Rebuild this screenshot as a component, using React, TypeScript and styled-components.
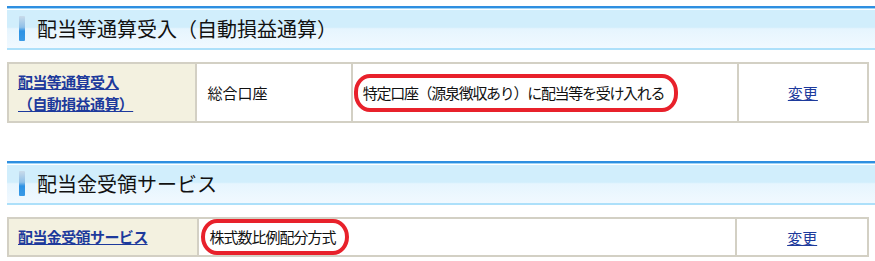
import React from 'react';
import styled, { createGlobalStyle } from 'styled-components';

const GlobalStyle = createGlobalStyle`
  body {
    margin: 0;
    background: #fff;
    font-family: "Noto Sans CJK JP", "Liberation Sans", sans-serif;
  }
`;

const Page = styled.div`
  padding: 6px 0 0 7px;
`;

const Section = styled.section`
  margin-bottom: 38px;

  &:last-child {
    margin-bottom: 0;
  }
`;

const SectionHeader = styled.div`
  display: flex;
  align-items: center;
  height: 40px;
  border-top: 2px solid #2f8fe0;
  border-bottom: 2px solid #ade0fa;
  box-shadow: inset 0 1px 0 #9fd4f7, inset 0 2px 0 #ffffff;
  background: linear-gradient(#d1eefc 0%, #d1eefc 48%, #e6f5fe 52%, #f1f9ff 100%);
  padding-left: 12px;
  margin-bottom: 12px;
`;

const Marker = styled.span`
  width: 6px;
  height: 25px;
  border-radius: 1px;
  background: linear-gradient(#c9dbea 0%, #8fc0e8 45%, #2d92e4 60%, #3a9ae6 100%);
  margin-right: 12px;
`;

const Title = styled.h2`
  margin: 0;
  font-size: 20px;
  font-weight: normal;
  color: #111;
  letter-spacing: 0;
`;

const Table = styled.table`
  width: 862px;
  border-collapse: collapse;
  table-layout: fixed;
  font-size: 15px;
  color: #111;
`;

const Row = styled.tr<{ $tall?: boolean }>`
  height: ${(p) => (p.$tall ? '59px' : '38px')};
`;

const LabelCell = styled.th`
  width: 177px;
  background: #f3f1e0;
  border: 2px solid #d3d0c4;
  padding: 0 0 0 9px;
  text-align: left;
  vertical-align: middle;
`;

const Cell = styled.td<{ $w: number; $pad?: number; $center?: boolean }>`
  width: ${(p) => p.$w}px;
  border: 2px solid #d3d0c4;
  padding: 0 0 0 ${(p) => p.$pad ?? 10}px;
  text-align: ${(p) => (p.$center ? 'center' : 'left')};
  vertical-align: middle;
`;

const LabelLink = styled.a`
  color: #1d3a9c;
  font-weight: bold;
  text-decoration: underline;
  line-height: 22px;
  letter-spacing: -0.6px;
`;

const ChangeLink = styled.a`
  color: #1d3a9c;
  text-decoration: underline;
`;

const Circled = styled.span<{ $small?: boolean }>`
  display: inline-block;
  border: 4px solid #e8212b;
  border-radius: 16px / 18px;
  padding: ${(p) => (p.$small ? '4px 10px 4px 4px' : '5px 10px 5px 5px')};
  line-height: 20px;
  letter-spacing: ${(p) => (p.$small ? '-1px' : '-1.3px')};
`;

const App: React.FC = () => {
  return (
    <>
      <GlobalStyle />
      <Page>
        <Section>
          <SectionHeader>
            <Marker />
            <Title>配当等通算受入（自動損益通算）</Title>
          </SectionHeader>
          <Table>
            <tbody>
              <Row $tall>
                <LabelCell>
                  <LabelLink href="#">
                    配当等通算受入
                    <br />
                    （自動損益通算）
                  </LabelLink>
                </LabelCell>
                <Cell $w={143}>総合口座</Cell>
                <Cell $w={382} $pad={1}>
                  <Circled>特定口座（源泉徴収あり）に配当等を受け入れる</Circled>
                </Cell>
                <Cell $w={128} $pad={0} $center>
                  <ChangeLink href="#">変更</ChangeLink>
                </Cell>
              </Row>
            </tbody>
          </Table>
        </Section>
        <Section>
          <SectionHeader>
            <Marker />
            <Title>配当金受領サービス</Title>
          </SectionHeader>
          <Table>
            <tbody>
              <Row>
                <LabelCell>
                  <LabelLink href="#">配当金受領サービス</LabelLink>
                </LabelCell>
                <Cell $w={527} $pad={2}>
                  <Circled $small>株式数比例配分方式</Circled>
                </Cell>
                <Cell $w={128} $pad={0} $center>
                  <ChangeLink href="#">変更</ChangeLink>
                </Cell>
              </Row>
            </tbody>
          </Table>
        </Section>
      </Page>
    </>
  );
};

export default App;
